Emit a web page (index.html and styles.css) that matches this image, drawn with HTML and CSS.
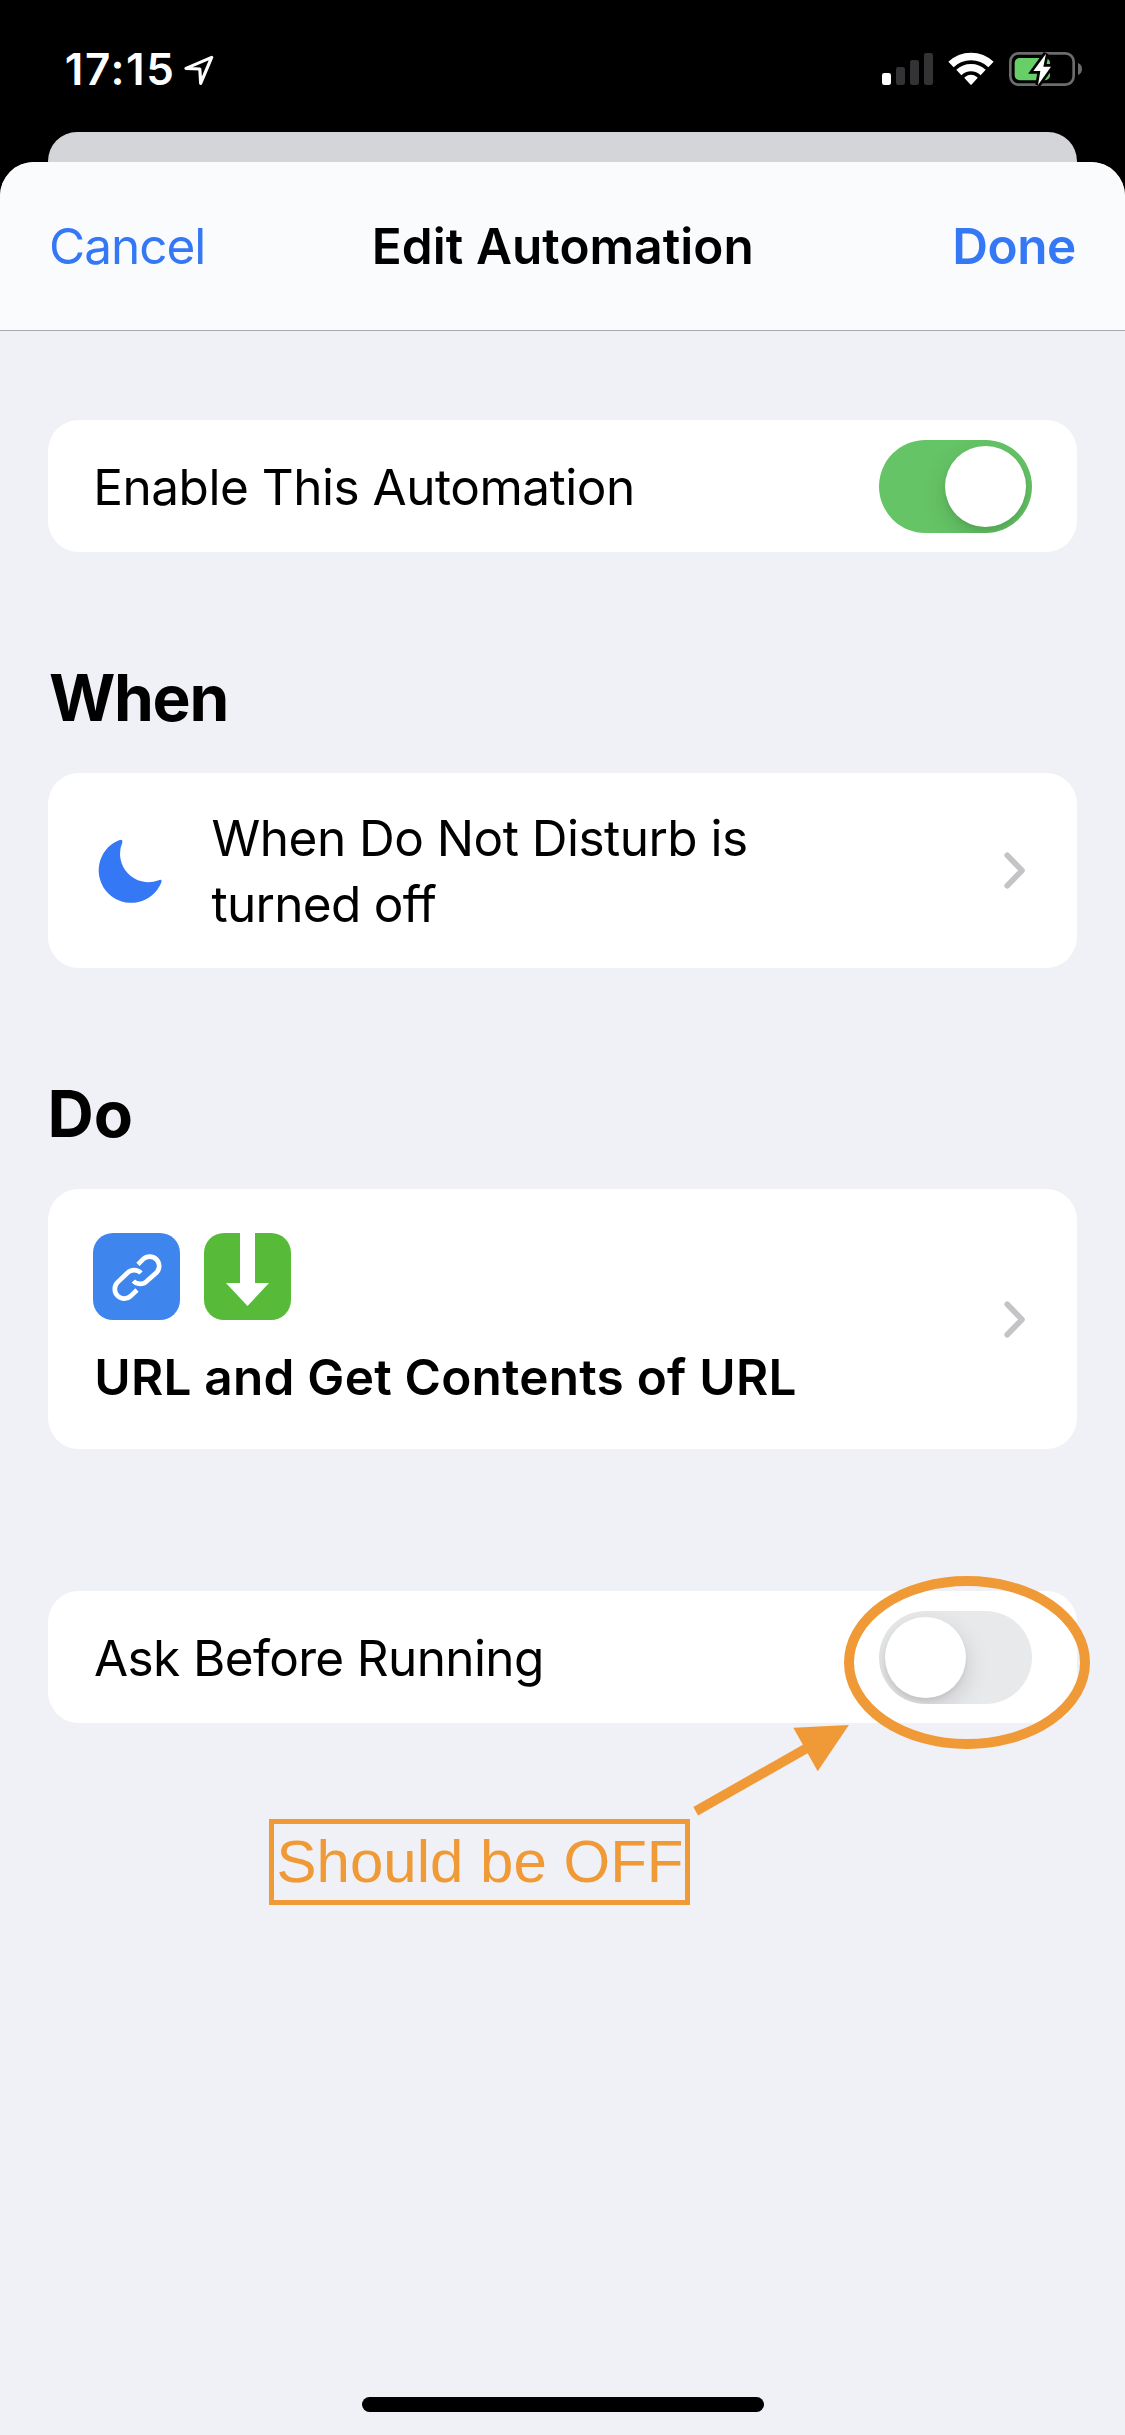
FILE: index.html
```html
<!DOCTYPE html>
<html lang="en">
<head>
<meta charset="utf-8">
<title>Edit Automation</title>
<link rel="stylesheet" href="styles.css">
</head>
<body>
<div class="screen">
  <header class="status-bar">
    <div class="status-left">
      <span class="clock">17:15</span>
      <svg class="location" width="32" height="32" viewBox="0 0 96 96"><path d="M83 13 L6 46 L47.500 48 L50 91 Z" fill="none" stroke="#fff" stroke-width="9.500" stroke-linejoin="round"/></svg>
    </div>
    <svg class="status-icons" width="202" height="38" viewBox="126 150 606 114">
      <rect x="126" y="219" width="27" height="36" rx="7" fill="#fff"/>
      <g fill="#333335">
        <rect x="168" y="201" width="27" height="54" rx="7"/>
        <rect x="210" y="180" width="27" height="75" rx="7"/>
        <rect x="252" y="159" width="27" height="96" rx="7"/>
      </g>
      <g fill="none" stroke="#fff" stroke-linejoin="round">
        <path d="M333 193.500 A87 87 0 0 1 453 193.500" stroke-width="23"/>
        <path d="M356.500 217.500 A53.500 53.500 0 0 1 429.500 217.500" stroke-width="22"/>
      </g>
      <path d="M374 234.500 Q372 232.500 375 231 Q393 218 411 231 Q414 232.500 412 234.500 L395 253.500 Q393 255.500 391 253.500 Z" fill="#fff"/>
      <rect x="511" y="160" width="190" height="94" rx="25" fill="none" stroke="#6c6c6e" stroke-width="8"/>
      <path d="M714 189 Q726 194 726 207 Q726 220 714 225 Z" fill="#6c6c6e"/>
      <rect x="524" y="174" width="106" height="67" rx="15" fill="#68ce67"/>
      <path d="M618 161 L580 213 L601 213 L594 255 L633 200 L610 200 Z" fill="#fff" stroke="#000" stroke-width="16" paint-order="stroke"/>
    </svg>
  </header>
  <div class="back-card"></div>
  <main class="sheet">
    <nav class="nav">
      <span class="cancel">Cancel</span>
      <h1 class="title">Edit Automation</h1>
      <span class="done">Done</span>
    </nav>
    <section class="card card-toggle">
      <span class="label label-enable">Enable This Automation</span>
      <span class="toggle toggle-on"><span class="knob"></span></span>
    </section>
    <h2 class="heading heading-when">When</h2>
    <section class="card card-when">
      <svg class="moon" width="65" height="64" viewBox="0 0 65 64"><path d="M21 1.200 Q25 -.5 24.300 3.500 A28.500 28.500 0 0 0 60 41.500 Q64.800 39.500 63.200 43.800 A32.500 32.500 0 1 1 21 1.200 Z" fill="#3478f6"/></svg>
      <p class="label trigger"><span class="line">When Do Not Disturb is</span><br><span class="line-end">turned off</span></p>
      <svg class="chevron" width="22" height="37" viewBox="0 0 22 37"><path d="M3.200 3.200 L18 18.500 L3.200 33.800" fill="none" stroke="#c4c4c6" stroke-width="5.600" stroke-linecap="round" stroke-linejoin="round"/></svg>
    </section>
    <h2 class="heading heading-do">Do</h2>
    <section class="card card-do">
      <div class="actions">
        <div class="tiles">
          <svg class="tile tile-url" width="87" height="87" viewBox="0 0 261 261">
            <g transform="translate(-159 -189)" fill="none" stroke="#fff" stroke-width="14">
              <path d="M294 283 L309.500 267.500 A28.500 28.500 0 0 1 350.500 307 L320 334 A28.500 28.500 0 0 1 280 333"/>
              <path d="M291 360 L273.500 377 A28.500 28.500 0 0 1 232.500 337 L262 309 A28.500 28.500 0 0 1 303 309"/>
            </g>
          </svg>
          <svg class="tile tile-get" width="87" height="87" viewBox="0 0 261 261"><path d="M108 -3 H153 V150 H195 L130.500 219 L66 150 H108 Z" fill="#fff"/></svg>
        </div>
        <p class="action-name">URL and Get Contents of URL</p>
      </div>
      <svg class="chevron" width="22" height="37" viewBox="0 0 22 37"><path d="M3.200 3.200 L18 18.500 L3.200 33.800" fill="none" stroke="#c4c4c6" stroke-width="5.600" stroke-linecap="round" stroke-linejoin="round"/></svg>
    </section>
    <section class="card card-toggle card-ask">
      <span class="label label-ask">Ask Before Running</span>
      <span class="toggle toggle-off"><span class="knob"></span></span>
    </section>
    <div class="home-indicator"></div>
  </main>
  <!-- Callout drawn over the switch -->
  <svg class="callout-marks" width="430" height="260" viewBox="690 1570 430 260">
    <ellipse cx="967" cy="1662.500" rx="118" ry="81.500" fill="none" stroke="#f09937" stroke-width="10"/>
    <path d="M695.700 1811.300 L807 1748" stroke="#f09937" stroke-width="9.800"/>
    <path d="M848.900 1725 L793.300 1727.800 L817.700 1771.200 Z" fill="#f09937"/>
  </svg>
  <div class="callout">Should be OFF</div>
</div>
</body>
</html>
```
FILE: styles.css
```css
* { box-sizing: border-box; }
body {
  margin: 0;
  background: #000;
  font-family: Inter, "Noto Sans", sans-serif;
  font-size: 49.5px;
  color: #000;
}
h1, h2, p { margin: 0; }
.screen {
  position: relative;
  width: 1125px;
  height: 2435px;
  overflow: hidden;
  display: flex;
  flex-direction: column;
  background: #000;
}
.status-bar {
  height: 132px;
  flex: none;
  display: flex;
  justify-content: space-between;
  align-items: flex-start;
  padding: 0 41px 0 64.7px;
}
.status-left { display: flex; }
.clock {
  margin-top: 39px;
  line-height: 60px;
  font-size: 44px;
  font-weight: 600;
  letter-spacing: 1.62px;
  color: #fff;
  width: 119.3px;
}
.location { margin-top: 53px; }
.status-icons { margin-top: 50px; }
.back-card {
  height: 30px;
  flex: none;
  margin: 0 48px;
  background: #d4d5d9;
  border-radius: 29px 29px 0 0;
}
.sheet {
  flex: 1;
  display: flex;
  flex-direction: column;
  background: #f0f1f6;
  border-radius: 34px 34px 0 0;
  overflow: hidden;
}
.nav {
  height: 169px;
  flex: none;
  display: grid;
  grid-template-columns: 1fr auto 1fr;
  align-items: center;
  padding: 0 49.3px 0 49px;
  background: #fafbfd;
  border-bottom: 1px solid #a9aaae;
}
.cancel { color: #3478f6; letter-spacing: -1px; }
.title { margin-left: 1px; font-size: 49.5px; font-weight: 600; letter-spacing: .066px; }
.done { justify-self: end; color: #3478f6; font-weight: 600; letter-spacing: -.49px; }
.card {
  flex: none;
  display: flex;
  align-items: center;
  margin: 0 48px;
  background: #fff;
  border-radius: 31px;
}
.card-toggle {
  height: 132px;
  justify-content: space-between;
  padding: 0 45px 0 45.3px;
}
.nav + .card { margin-top: 89px; }
.label-enable { padding-top: 2px; letter-spacing: -.489px; }
.label-ask { padding-top: 2px; margin-left: .8px; letter-spacing: -.636px; }
.toggle {
  width: 153px;
  height: 93px;
  padding: 6px;
  border-radius: 47px;
  display: flex;
  overflow: hidden;
}
.toggle-on { background: #65c466; justify-content: flex-end; }
.toggle-off { background: #e8e9eb; }
.knob {
  width: 81px;
  height: 81px;
  border-radius: 50%;
  background: #fff;
  box-shadow: 0 9px 24px rgba(0, 0, 0, .15), 0 3px 4px rgba(0, 0, 0, .06);
}
.heading {
  margin: 108px 0 37px 48.9px;
  line-height: 76px;
  font-size: 64px;
  font-weight: 700;
}
.heading-when { letter-spacing: -1.29px; }
.heading-do { margin-left: 47.5px; }
.card-when {
  height: 195px;
  padding: 0 51px 0 50px;
}
.trigger {
  flex: 1;
  margin-left: 48.6px;
  padding-top: 1px;
  line-height: 66px;
}
.line { letter-spacing: -.525px; }
.line-end { letter-spacing: -.72px; }
.card-do {
  height: 260px;
  padding: 0 51px 0 45px;
  justify-content: space-between;
}
.actions { align-self: flex-start; padding-top: 44px; }
.tiles { display: flex; gap: 24px; }
.tile { display: block; border-radius: 20px; }
.tile-url { background: #3e85ed; }
.tile-get { background: #58ba39; }
.action-name {
  margin: 27px 0 0 1.3px;
  line-height: 60px;
  font-weight: 600;
  letter-spacing: .224px;
}
.card-ask { margin-top: 142px; }
.home-indicator {
  width: 402px;
  height: 15px;
  margin: auto auto 23px;
  border-radius: 8px;
  background: #000;
}
.callout-marks { position: absolute; left: 690px; top: 1570px; }
.callout {
  position: absolute;
  left: 269px;
  top: 1819px;
  width: 421px;
  height: 86px;
  padding-left: 2.6px;
  border: 5px solid #f09937;
  color: #f09937;
  font: 60px/76px "Liberation Sans", Arial, sans-serif;
  white-space: nowrap;
}
```
